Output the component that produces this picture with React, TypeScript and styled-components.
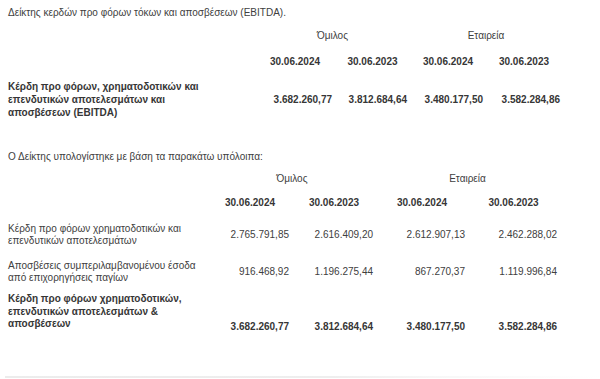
import React from "react";
import styled, { createGlobalStyle } from "styled-components";

const GlobalStyle = createGlobalStyle`
  html, body {
    margin: 0;
    padding: 0;
    background: #ffffff;
  }
  body {
    font-family: "Liberation Sans", Arial, sans-serif;
    font-size: 10px;
    color: #404040;
  }
`;

const Page = styled.div`
  width: 600px;
  height: 379px;
  box-sizing: border-box;
  padding-left: 8px;
  display: flex;
  flex-direction: column;
  overflow: hidden;
`;

const Caption = styled.div<{ $mt: number }>`
  margin-top: ${(p) => p.$mt}px;
  line-height: 12px;
  white-space: nowrap;
`;

const Table = styled.div`
  display: flex;
  flex-direction: column;
`;

const Row = styled.div<{ $cols: string; $mt: number; $lh?: number; $bold?: boolean }>`
  display: grid;
  grid-template-columns: ${(p) => p.$cols};
  margin-top: ${(p) => p.$mt}px;
  line-height: ${(p) => p.$lh ?? 12}px;
  font-weight: ${(p) => (p.$bold ? 700 : 400)};
  color: ${(p) => (p.$bold ? "#363636" : "inherit")};
`;

const GroupHead = styled.div<{ $start: number }>`
  grid-column: ${(p) => p.$start} / span 2;
  text-align: center;
`;

const DateHead = styled.div`
  text-align: center;
  font-weight: 700;
  color: #363636;
`;

const Label = styled.div`
  grid-column: 1;
`;

const Amount = styled.div<{ $pad?: number; $align?: "center" | "end" }>`
  text-align: right;
  padding-right: ${(p) => p.$pad ?? 3}px;
  align-self: ${(p) => p.$align ?? "center"};
  margin-bottom: ${(p) => (p.$align === "end" ? -3 : 0)}px;
  white-space: nowrap;
`;

const FooterLine = styled.div`
  margin-top: auto;
  margin-left: -3px;
  margin-bottom: 1px;
  height: 2px;
  background: linear-gradient(to right, #ececec 0%, #eeeeee 55%, #f7f7f7 72%, #ffffff 100%);
`;

const cols1 = "247px 80px 75px 76px 76px";
const cols2 = "200px 84px 84px 92px 91px";

type Line = { label: React.ReactNode; values: string[]; bold?: boolean; mt: number; lh: number; align?: "center" | "end" };

const rows2: Line[] = [
  {
    label: (
      <>
        Κέρδη προ φόρων χρηματοδοτικών και
        <br />
        επενδυτικών αποτελεσμάτων
      </>
    ),
    values: ["2.765.791,85", "2.616.409,20", "2.612.907,13", "2.462.288,02"],
    mt: 14,
    lh: 11.5,
  },
  {
    label: (
      <>
        Αποσβέσεις συμπεριλαμβανομένου έσοδα
        <br />
        από επιχορηγήσεις παγίων
      </>
    ),
    values: ["916.468,92", "1.196.275,44", "867.270,37", "1.119.996,84"],
    mt: 14,
    lh: 12,
  },
  {
    label: (
      <>
        Κέρδη προ φόρων χρηματοδοτικών,
        <br />
        επενδυτικών αποτελεσμάτων &amp;
        <br />
        αποσβέσεων
      </>
    ),
    values: ["3.682.260,77", "3.812.684,64", "3.480.177,50", "3.582.284,86"],
    bold: true,
    mt: 9,
    lh: 12.5,
    align: "end",
  },
];

const pads1 = [3, 3, 3, 2];
const pads2 = [3, 3, 3, 2];

export default function App() {
  return (
    <>
      <GlobalStyle />
      <Page>
        <Caption $mt={7}>Δείκτης κερδών προ φόρων τόκων και αποσβέσεων (EBITDA).</Caption>
        <Table>
          <Row $cols={cols1} $mt={11}>
            <GroupHead $start={2}>Όμιλος</GroupHead>
            <GroupHead $start={4}>Εταιρεία</GroupHead>
          </Row>
          <Row $cols={cols1} $mt={14}>
            <Label />
            <DateHead>30.06.2024</DateHead>
            <DateHead>30.06.2023</DateHead>
            <DateHead>30.06.2024</DateHead>
            <DateHead>30.06.2023</DateHead>
          </Row>
          <Row $cols={cols1} $mt={12} $lh={13} $bold>
            <Label>
              Κέρδη προ φόρων, χρηματοδοτικών και
              <br />
              επενδυτικών αποτελεσμάτων και
              <br />
              αποσβέσεων (EBITDA)
            </Label>
            {["3.682.260,77", "3.812.684,64", "3.480.177,50", "3.582.284,86"].map((v, i) => (
              <Amount key={i} $pad={pads1[i]}>
                {v}
              </Amount>
            ))}
          </Row>
        </Table>

        <Caption $mt={32}>Ο Δείκτης υπολογίστηκε με βάση τα παρακάτω υπόλοιπα:</Caption>
        <Table>
          <Row $cols={cols2} $mt={10}>
            <GroupHead $start={2}>Όμιλος</GroupHead>
            <GroupHead $start={4}>Εταιρεία</GroupHead>
          </Row>
          <Row $cols={cols2} $mt={12}>
            <Label />
            <DateHead>30.06.2024</DateHead>
            <DateHead>30.06.2023</DateHead>
            <DateHead>30.06.2024</DateHead>
            <DateHead>30.06.2023</DateHead>
          </Row>
          {rows2.map((r, idx) => (
            <Row key={idx} $cols={cols2} $mt={r.mt} $lh={r.lh} $bold={r.bold}>
              <Label>{r.label}</Label>
              {r.values.map((v, i) => (
                <Amount key={i} $pad={pads2[i]} $align={r.align}>
                  {v}
                </Amount>
              ))}
            </Row>
          ))}
        </Table>
        <FooterLine />
      </Page>
    </>
  );
}
